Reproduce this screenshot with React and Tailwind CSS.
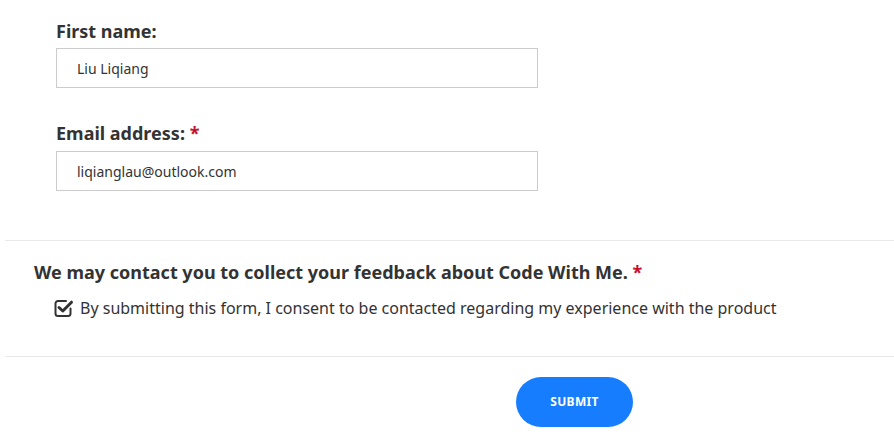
import React from "react";

function CheckedBox() {
    return (
        <svg viewBox="0 0 20 20" className="w-[20px] h-[20px] shrink-0" fill="none">
            <path
                d="M12 3 H4 A2.5 2.5 0 0 0 1.5 5.5 V15.5 A2.5 2.5 0 0 0 4 18 H14 A2.5 2.5 0 0 0 16.5 15.5 V10.5"
                stroke="#333"
                strokeWidth="2"
                strokeLinecap="round"
            />
            <path
                d="M5 9.5 L8.8 13 L17.5 4.2"
                stroke="#333"
                strokeWidth="3"
                strokeLinecap="round"
                strokeLinejoin="round"
            />
        </svg>
    );
}

export default function App() {
    return (
        <div
            className="w-[894px] h-[438px] bg-white text-[#333] overflow-hidden pl-[5px]"
            style={{ fontFamily: '"Noto Sans", "Open Sans", sans-serif' }}
        >
            {/* Fields */}
            <div className="pl-[51px] pt-[19px] pb-[49px]">
                <label className="block text-[18px] leading-6 font-bold mb-[5px]">
                    First name:
                </label>
                <input
                    type="text"
                    defaultValue="Liu Liqiang"
                    className="block w-[482px] h-10 border border-[#ccc] px-5 text-[14px] text-[#333] outline-none"
                />

                <label className="block text-[18px] leading-6 font-bold mt-[33px] mb-[6px]">
                    Email address: <span className="text-[#c8102e]">*</span>
                </label>
                <input
                    type="email"
                    defaultValue="liqianglau@outlook.com"
                    className="block w-[482px] h-10 border border-[#ccc] px-5 text-[14px] text-[#333] outline-none"
                />
            </div>

            {/* Consent */}
            <div className="border-t border-[#e8e8e8] pl-[29px] pt-[19px] pb-[36px]">
                <p className="text-[18px] leading-6 font-bold">
                    We may contact you to collect your feedback about Code With Me.{" "}
                    <span className="text-[#c8102e]">*</span>
                </p>
                <label className="flex items-center gap-[6px] mt-3 pl-5 text-[16px] leading-6">
                    <CheckedBox />
                    By submitting this form, I consent to be contacted regarding my experience with the product
                </label>
            </div>

            {/* Submit */}
            <div className="border-t border-[#e8e8e8] pt-5 pl-[511px]">
                <button
                    type="submit"
                    className="w-[117px] h-[50px] rounded-full bg-[#167dff] text-white text-[12px] font-bold tracking-wide"
                >
                    SUBMIT
                </button>
            </div>
        </div>
    );
}
